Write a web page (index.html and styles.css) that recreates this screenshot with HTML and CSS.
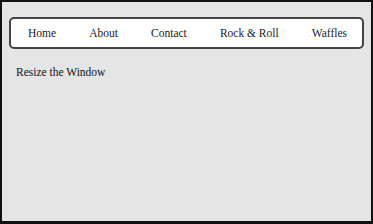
FILE: index.html
```html
<!DOCTYPE html>
<html lang="en">
<head>
    <meta charset="UTF-8">
    <title>Resize the Window</title>
    <link rel="stylesheet" href="styles.css">
</head>
<body>
    <div class="page">
        <!-- Navigation -->
        <ul class="nav">
            <li><a href="#">Home</a></li>
            <li><a href="#">About</a></li>
            <li><a href="#">Contact</a></li>
            <li><a href="#">Rock &amp; Roll</a></li>
            <li><a href="#">Waffles</a></li>
        </ul>
        <p class="note">Resize the Window</p>
    </div>
</body>
</html>
```

FILE: styles.css
```css
html, body {
    margin: 0;
    padding: 0;
    height: 100%;
}
body {
    box-sizing: border-box;
    border: 2px solid #111;
    border-bottom-width: 3px;
    background: #e5e5e5;
    font-family: "Liberation Serif", "Times New Roman", serif;
    font-size: 11.5px;
    color: #111;
}
.page {
    padding: 15px 7px 0 7px;
}
.nav {
    display: flex;
    justify-content: space-between;
    align-items: center;
    list-style: none;
    margin: 0;
    padding: 0 15px 0 17px;
    height: 28px;
    background: #fff;
    border: 2px solid #444;
    border-radius: 5px;
}
.nav a {
    color: #222;
    text-decoration: none;
}
.note {
    margin: 17px 0 0 7px;
}
```
